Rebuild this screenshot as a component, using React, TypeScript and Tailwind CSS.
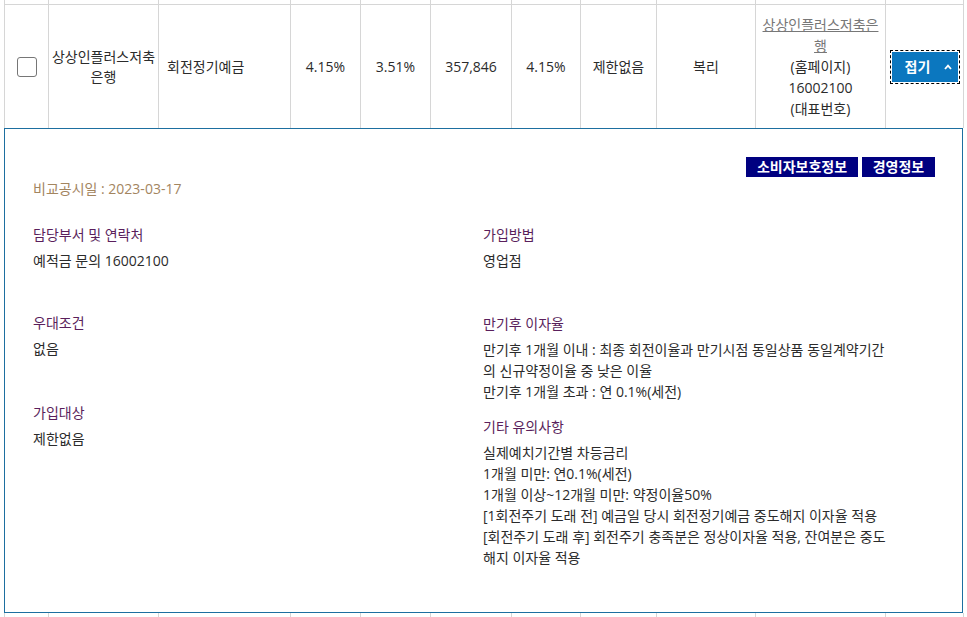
import React from "react";

const W = [44, 110, 132, 70, 70, 81, 69, 76, 99, 130];

function Strip() {
  return (
    <div className="flex h-[4px] pl-[4px]">
      {W.map((w, i) => (
        <div key={i} className="border-l border-[#d6d6d6] h-full" style={{ width: w }} />
      ))}
      <div className="w-[79px] h-full border-l border-r border-[#d6d6d6]" />
    </div>
  );
}

function Head({ children }: { children: React.ReactNode }) {
  return <div className="leading-[21px] text-[#5a1f5c]">{children}</div>;
}

function Body({ children }: { children: React.ReactNode }) {
  return <div className="mt-[5px] leading-[21px] text-[#2b2b2b] whitespace-nowrap">{children}</div>;
}

export default function App() {
  const cell = "border-l border-[#d6d6d6] h-full flex items-center justify-center";
  return (
    <div
      className="w-[967px] h-[617px] overflow-hidden bg-white text-[14px] text-[#2b2b2b]"
      style={{ fontFamily: '"Open Sans", "Noto Sans CJK KR", sans-serif' }}
    >
      <Strip />
      <div className="flex h-[124px] ml-[4px] w-[960px] border-t border-[#d6d6d6]">
        <div className={`${cell} w-[44px]`}>
          <div className="w-[20px] h-[20px] rounded-[3px] border border-[#767676] bg-white" />
        </div>
        <div className={`${cell} w-[110px] text-center leading-[20px] whitespace-nowrap`}>
          <div>
            상상인플러스저축
            <br />
            은행
          </div>
        </div>
        <div className="border-l border-[#d6d6d6] h-full flex items-center w-[132px] pl-[8px]">
          회전정기예금
        </div>
        <div className={`${cell} w-[70px]`}>4.15%</div>
        <div className={`${cell} w-[70px]`}>3.51%</div>
        <div className={`${cell} w-[81px]`}>357,846</div>
        <div className={`${cell} w-[69px]`}>4.15%</div>
        <div className={`${cell} w-[76px]`}>제한없음</div>
        <div className={`${cell} w-[99px]`}>복리</div>
        <div className={`${cell} w-[130px] text-center leading-[21px] whitespace-nowrap`}>
          <div>
            <span className="text-[#777] underline">
              상상인플러스저축은
              <br />
              행
            </span>
            <br />
            (홈페이지)
            <br />
            16002100
            <br />
            (대표번호)
          </div>
        </div>
        <div className={`${cell} w-[79px] border-r`}>
          <div className="border border-dashed border-black p-[1px]">
            <div className="w-[66px] h-[30px] bg-[#0b77bf] flex items-center pl-[13px] text-white font-bold">
              <span className="leading-[20px]">접기</span>
              <svg className="ml-[14px]" width="8" height="6" viewBox="0 0 8 6">
                <polyline points="1,5 4,1.6 7,5" fill="none" stroke="white" strokeWidth="1.8" />
              </svg>
            </div>
          </div>
        </div>
      </div>
      <div className="ml-[4px] w-[959px] h-[485px] border border-[#1d6fa0] pt-[28px] pl-[28px] pr-[27px]">
        <div className="flex justify-end gap-[4px]">
          <div className="w-[112px] h-[20px] bg-[#000080] text-white font-bold leading-[20px] text-center">
            소비자보호정보
          </div>
          <div className="w-[73px] h-[20px] bg-[#000080] text-white font-bold leading-[20px] text-center">
            경영정보
          </div>
        </div>
        <div className="mt-[1px] leading-[21px] text-[#a3855f]">비교공시일 : 2023-03-17</div>
        <div className="mt-[25px] flex">
          <div className="w-[450px] flex flex-col">
            <div>
              <Head>담당부서 및 연락처</Head>
              <Body>예적금 문의 16002100</Body>
            </div>
            <div className="mt-[41px]">
              <Head>우대조건</Head>
              <Body>없음</Body>
            </div>
            <div className="mt-[43px]">
              <Head>가입대상</Head>
              <Body>제한없음</Body>
            </div>
          </div>
          <div className="flex-1 flex flex-col">
            <div>
              <Head>가입방법</Head>
              <Body>영업점</Body>
            </div>
            <div className="mt-[42px]">
              <Head>만기후 이자율</Head>
              <Body>
                만기후 1개월 이내 : 최종 회전이율과 만기시점 동일상품 동일계약기간
                <br />
                의 신규약정이율 중 낮은 이율
                <br />
                만기후 1개월 초과 : 연 0.1%(세전)
              </Body>
            </div>
            <div className="mt-[14px]">
              <Head>기타 유의사항</Head>
              <Body>
                실제예치기간별 차등금리
                <br />
                1개월 미만: 연0.1%(세전)
                <br />
                1개월 이상~12개월 미만: 약정이율50%
                <br />
                [1회전주기 도래 전] 예금일 당시 회전정기예금 중도해지 이자율 적용
                <br />
                [회전주기 도래 후] 회전주기 충족분은 정상이자율 적용, 잔여분은 중도
                <br />
                해지 이자율 적용
              </Body>
            </div>
          </div>
        </div>
      </div>
      <Strip />
    </div>
  );
}
